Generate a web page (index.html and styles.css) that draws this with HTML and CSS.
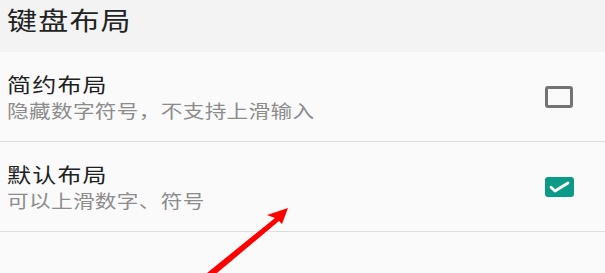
FILE: index.html
```html
<!DOCTYPE html>
<html lang="zh">
<head>
<meta charset="utf-8">
<link rel="stylesheet" href="styles.css">
</head>
<body>
<div class="page">
  <div class="header"><span class="wide">键盘布局</span></div>
  <div class="row">
    <div class="texts">
      <div class="title wide">简约布局</div>
      <div class="sub wide">隐藏数字符号，不支持上滑输入</div>
    </div>
    <div class="check"></div>
  </div>
  <div class="row">
    <div class="texts">
      <div class="title wide">默认布局</div>
      <div class="sub wide">可以上滑数字、符号</div>
    </div>
    <div class="check on">
      <svg width="29" height="20" viewBox="0 0 29 20"><path d="M6 10.2 L10 14 L23 6" fill="none" stroke="#fff" stroke-width="2.8" stroke-linecap="round" stroke-linejoin="round"/></svg>
    </div>
  </div>
  <svg class="arrow" width="605" height="273" viewBox="0 0 605 273">
    <polygon points="288,208 267,215 275,218 207,273 217,273 279,221 282,224" fill="#ff0000"/>
  </svg>
</div>
</body>
</html>
```
FILE: styles.css
```css
html, body {
  margin: 0;
  padding: 0;
  background: #fafafa;
}
.page {
  position: relative;
  width: 605px;
  height: 273px;
  overflow: hidden;
  font-family: "Noto Sans CJK SC", "Noto Sans", sans-serif;
}
.wide {
  display: inline-block;
  transform: scaleX(1.2);
  transform-origin: left center;
  white-space: nowrap;
}
.header {
  height: 52px;
  background: #f3f3f3;
  color: #222;
  font-size: 25px;
  line-height: 38px;
  padding-left: 7px;
  box-sizing: border-box;
}
.header .wide {
  letter-spacing: 1px;
}
.row {
  height: 90px;
  border-bottom: 1px solid #dcdcdc;
  box-sizing: border-box;
  display: flex;
  align-items: center;
  padding-left: 7px;
  padding-right: 31px;
}
.texts {
  flex: 1;
  display: flex;
  flex-direction: column;
  align-items: flex-start;
}
.title {
  font-size: 20px;
  line-height: 26px;
  color: #212121;
  letter-spacing: 1px;
}
.sub {
  font-size: 18px;
  line-height: 24px;
  color: #8c8c8c;
  letter-spacing: 0.3px;
}
.check {
  width: 28px;
  height: 22px;
  margin-right: 1px;
  border: 3px solid #737373;
  border-radius: 3px;
  box-sizing: border-box;
}
.check.on {
  border: none;
  background: #0a9a87;
  width: 29px;
  height: 20px;
  margin-right: 0;
  display: flex;
}
.arrow {
  position: absolute;
  left: 0;
  top: 0;
}
```
